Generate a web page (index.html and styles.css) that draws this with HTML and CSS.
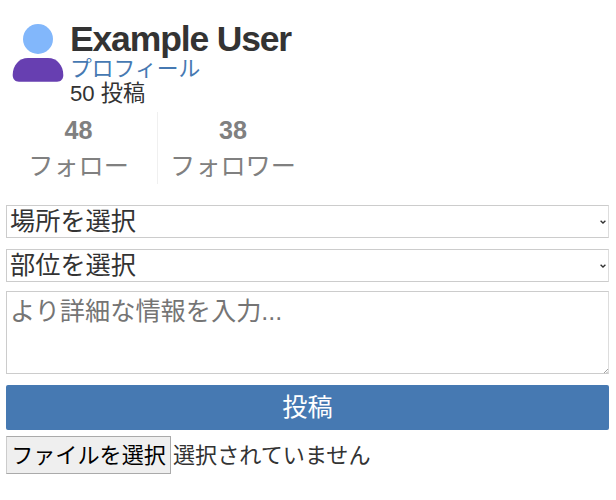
FILE: index.html
```html
<!DOCTYPE html>
<html lang="ja">
<head>
<meta charset="utf-8">
<title>プロフィール</title>
<link rel="stylesheet" href="styles.css">
</head>
<body>
<main class="page">
  <section class="profile">
    <svg class="avatar" viewBox="0 0 52 59" aria-hidden="true">
      <circle cx="26" cy="15" r="15" fill="#82b7fb"/>
      <path d="M16 34H36C45 34 51.3 41.5 51.3 51C51.3 55 49 57.7 45 57.7H7C3 57.7 .7 55 .7 51C.7 41.5 7 34 16 34Z" fill="#673fb1"/>
    </svg>
    <div class="info">
      <h1 class="name">Example User</h1>
      <a class="profile-link">プロフィール</a>
      <span class="count">50 投稿</span>
    </div>
  </section>
  <section class="stats">
    <a class="stat"><strong class="number">48</strong><span>フォロー</span></a>
    <a class="stat followers"><strong class="number">38</strong><span>フォロワー</span></a>
  </section>
  <form class="form">
    <div class="field select"><span>場所を選択</span><svg class="chevron" viewBox="0 0 6 4"><path d="M.6 .8 3 3 5.4 .8"/></svg></div>
    <div class="field select"><span>部位を選択</span><svg class="chevron" viewBox="0 0 6 4"><path d="M.6 .8 3 3 5.4 .8"/></svg></div>
    <div class="field details"><span>より詳細な情報を入力...</span><svg class="grip" viewBox="0 0 4 4"><path d="M0 4 4 0M2.5 4 4 2.5"/></svg></div>
    <button class="submit" type="button">投稿</button>
    <div class="upload"><button class="choose" type="button">ファイルを選択</button><span>選択されていません</span></div>
  </form>
</main>
</body>
</html>
```
FILE: styles.css
```css
* { box-sizing: border-box; }
body {
  margin: 0;
  background: #fff;
  color: #333;
  font-family: "Liberation Sans", "Noto Sans CJK JP", sans-serif;
}
.page { padding: 24px 7px 0 6px; }
.profile { display: flex; height: 88px; padding-left: 6px; }
.avatar { width: 52px; height: 59px; margin-right: 6px; }
.info { display: flex; flex-direction: column; align-items: flex-start; white-space: nowrap; }
.name {
  margin: -3px 0 0;
  height: 36px;
  font-size: 35.5px;
  line-height: 37px;
  letter-spacing: -1.15px;
}
.profile-link { height: 24px; color: #4679b2; font-size: 21.8px; line-height: 24px; }
.count { height: 25px; font-size: 22.2px; line-height: 25px; }
.stats { display: flex; height: 72px; color: #808080; font-size: 25.2px; }
.stat {
  display: flex;
  flex-direction: column;
  align-items: center;
  width: 151px;
}
.stat:first-child { padding-right: 6px; }
.followers { border-left: 1px solid #f0f0f0; }
.number { height: 36px; line-height: 37px; }
.stat span { height: 36px; line-height: 37px; white-space: nowrap; }
.form { display: flex; flex-direction: column; margin-top: 21px; font-size: 25.2px; }
.field { border: 1px solid #ccc; border-right-color: #ddd; }
.select {
  display: flex;
  align-items: center;
  justify-content: space-between;
  height: 33px;
  margin-bottom: 11px;
  padding: 0 2px 0 3px;
  line-height: 31px;
}
.select + .select { margin-bottom: 9px; }
.chevron { width: 6px; height: 4px; fill: none; stroke: #333; stroke-width: 1.4; }
.details {
  display: flex;
  justify-content: space-between;
  height: 83px;
  padding: 2px 0 0 3px;
  color: #757575;
  line-height: 34px;
}
.grip { align-self: flex-end; width: 4px; height: 4px; stroke: #777; stroke-width: .7; }
.submit {
  height: 45px;
  margin-top: 11px;
  padding: 0;
  border: 0;
  border-radius: 2px;
  background: #4679b2;
  color: #fff;
  font: inherit;
  line-height: 43px;
}
.upload { display: flex; height: 38px; margin-top: 6px; font-size: 22.1px; line-height: 39px; }
.choose {
  width: 165px;
  height: 38px;
  margin-right: 2px;
  padding: 2px 0 0;
  border: 1px solid #aaa;
  border-left-color: #ccc;
  background: #efefef;
  color: #000;
  font: inherit;
  line-height: 34px;
  white-space: nowrap;
}
```
